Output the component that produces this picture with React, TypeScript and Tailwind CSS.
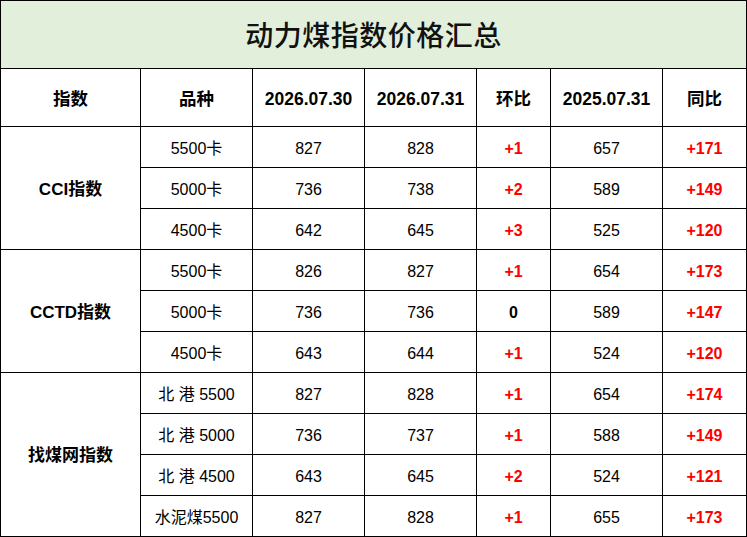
import React from "react";

type Row = {
  kind: string;
  d1: string;
  d2: string;
  hb: string;
  ly: string;
  tb: string;
};

const groups: { name: string; rows: Row[] }[] = [
  {
    name: "CCI指数",
    rows: [
      { kind: "5500卡", d1: "827", d2: "828", hb: "+1", ly: "657", tb: "+171" },
      { kind: "5000卡", d1: "736", d2: "738", hb: "+2", ly: "589", tb: "+149" },
      { kind: "4500卡", d1: "642", d2: "645", hb: "+3", ly: "525", tb: "+120" },
    ],
  },
  {
    name: "CCTD指数",
    rows: [
      { kind: "5500卡", d1: "826", d2: "827", hb: "+1", ly: "654", tb: "+173" },
      { kind: "5000卡", d1: "736", d2: "736", hb: "0", ly: "589", tb: "+147" },
      { kind: "4500卡", d1: "643", d2: "644", hb: "+1", ly: "524", tb: "+120" },
    ],
  },
  {
    name: "找煤网指数",
    rows: [
      { kind: "北 港 5500", d1: "827", d2: "828", hb: "+1", ly: "654", tb: "+174" },
      { kind: "北 港 5000", d1: "736", d2: "737", hb: "+1", ly: "588", tb: "+149" },
      { kind: "北 港 4500", d1: "643", d2: "645", hb: "+2", ly: "524", tb: "+121" },
      { kind: "水泥煤5500", d1: "827", d2: "828", hb: "+1", ly: "655", tb: "+173" },
    ],
  },
];

const headers = ["指数", "品种", "2026.07.30", "2026.07.31", "环比", "2025.07.31", "同比"];

const font = { fontFamily: '"Liberation Sans", "Noto Sans CJK SC", sans-serif' };

const cell = "bg-white flex items-center justify-center pt-[3px]";

const change = (v: string) =>
  v.startsWith("+") ? "font-bold text-[#ff0000]" : "font-bold text-black";

export default function App() {
  return (
    <div
      style={font}
      className="w-[747px] h-[537px] bg-black p-px grid gap-px grid-cols-[139px_111px_111px_111px_73px_111px_83px] grid-rows-[67px_57px_repeat(10,40px)]"
    >
      <div className="col-span-7 bg-[#e2efda] flex items-center justify-center pt-[5px] text-[28px] font-medium text-[#111] tracking-[0.5px]">
        动力煤指数价格汇总
      </div>

      {headers.map((h) => (
        <div key={h} className={`${cell} text-black text-[17.5px] font-bold`}>
          {h}
        </div>
      ))}

      {groups.map((g) => (
        <React.Fragment key={g.name}>
          <div
            className={`${cell} text-black text-[17px] font-bold ${
              g.rows.length === 4 ? "row-span-4" : "row-span-3"
            }`}
          >
            {g.name}
          </div>
          {g.rows.map((r, i) => (
            <React.Fragment key={i}>
              <div className={`${cell} text-black text-[16px]`}>{r.kind}</div>
              <div className={`${cell} text-black text-[16px]`}>{r.d1}</div>
              <div className={`${cell} text-black text-[16px]`}>{r.d2}</div>
              <div className={`${cell} text-[16px] ${change(r.hb)}`}>{r.hb}</div>
              <div className={`${cell} text-black text-[16px]`}>{r.ly}</div>
              <div className={`${cell} text-[16px] ${change(r.tb)}`}>{r.tb}</div>
            </React.Fragment>
          ))}
        </React.Fragment>
      ))}
    </div>
  );
}
